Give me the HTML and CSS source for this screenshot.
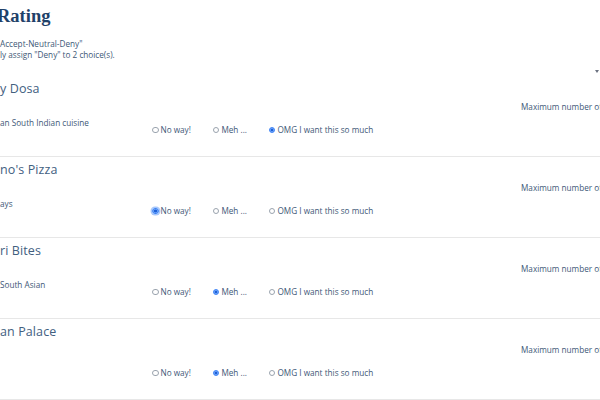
FILE: index.html
```html
<!DOCTYPE html>
<html>
<head>
<meta charset="utf-8">
<link rel="stylesheet" href="styles.css">
</head>
<body>
<div class="page">
  <header class="header">
    <h1 class="title">Rating</h1>
    <p class="note">Accept-Neutral-Deny"</p>
    <p class="note">ly assign "Deny" to 2 choice(s).</p>
    <div class="caret-row"><span class="caret"></span></div>
  </header>

  <div class="row">
    <div class="info">
      <div class="name">y Dosa</div>
      <div class="desc">an South Indian cuisine</div>
    </div>
    <div class="choices">
      <span class="opt"><span class="radio"></span>No way!</span>
      <span class="opt"><span class="radio"></span>Meh ...</span>
      <span class="opt"><span class="radio checked"></span>OMG I want this so much</span>
    </div>
    <div class="max">Maximum number of "Deny"</div>
  </div>

  <div class="row">
    <div class="info">
      <div class="name">no's Pizza</div>
      <div class="desc">ays</div>
    </div>
    <div class="choices">
      <span class="opt"><span class="radio checked focus"></span>No way!</span>
      <span class="opt"><span class="radio"></span>Meh ...</span>
      <span class="opt"><span class="radio"></span>OMG I want this so much</span>
    </div>
    <div class="max">Maximum number of "Deny"</div>
  </div>

  <div class="row">
    <div class="info">
      <div class="name">ri Bites</div>
      <div class="desc">South Asian</div>
    </div>
    <div class="choices">
      <span class="opt"><span class="radio"></span>No way!</span>
      <span class="opt"><span class="radio checked"></span>Meh ...</span>
      <span class="opt"><span class="radio"></span>OMG I want this so much</span>
    </div>
    <div class="max">Maximum number of "Deny"</div>
  </div>

  <div class="row">
    <div class="info">
      <div class="name">an Palace</div>
      <div class="desc"></div>
    </div>
    <div class="choices">
      <span class="opt"><span class="radio"></span>No way!</span>
      <span class="opt"><span class="radio checked"></span>Meh ...</span>
      <span class="opt"><span class="radio"></span>OMG I want this so much</span>
    </div>
    <div class="max">Maximum number of "Deny"</div>
  </div>
</div>
</body>
</html>
```

FILE: styles.css
```css
html, body {
  margin: 0;
  padding: 0;
  background: #ffffff;
}
body {
  width: 600px;
  height: 400px;
  overflow: hidden;
  font-family: "Open Sans", "DejaVu Sans", sans-serif;
  color: #3e5877;
}
.page {
  width: 600px;
}
.header {
  height: 76px;
  box-sizing: border-box;
  padding-top: 4px;
  display: flex;
  flex-direction: column;
}
.title {
  margin: 0 0 0 -3px;
  font-family: "Liberation Serif", "DejaVu Serif", serif;
  font-weight: bold;
  font-size: 18.5px;
  line-height: 24px;
  color: #1f4169;
}
.note {
  margin: 0;
  font-size: 8.2px;
  line-height: 11px;
  color: #3e5877;
}
.header .title + .note {
  margin-top: 10px;
}
.caret-row {
  margin-top: 10px;
  display: flex;
  justify-content: flex-end;
  padding-right: 1px;
}
.caret {
  width: 0;
  height: 0;
  border-left: 2.5px solid transparent;
  border-right: 2.5px solid transparent;
  border-top: 3px solid #6b7280;
}
.row {
  display: flex;
  height: 81px;
  box-sizing: border-box;
  border-bottom: 1px solid #e7e7e7;
}
.info {
  width: 152px;
  flex: none;
  padding-top: 4px;
}
.name {
  font-size: 12.5px;
  line-height: 17px;
  color: #42607f;
  white-space: nowrap;
  letter-spacing: 0.1px;
}
.desc {
  margin-top: 21px;
  font-size: 8.2px;
  line-height: 10px;
  color: #3e5877;
  white-space: nowrap;
  min-height: 10px;
}
.choices {
  width: 369px;
  flex: none;
  padding-top: 49px;
  display: flex;
  align-items: flex-start;
  gap: 22px;
  height: 10px;
}
.opt {
  display: flex;
  align-items: center;
  gap: 2px;
  font-size: 8.2px;
  line-height: 10px;
  color: #3e5877;
  white-space: nowrap;
}
.radio {
  width: 6.5px;
  height: 6.5px;
  box-sizing: border-box;
  border: 1px solid #9aa3ae;
  border-radius: 50%;
  background: #ffffff;
  flex: none;
}
.radio.checked {
  border-color: #3b82f6;
  background: radial-gradient(circle, #1d5fd6 0 1.3px, #6ea3f7 1.6px);
}
.radio.focus {
  box-shadow: 0 0 0 1.5px #a8c8fb;
}
.max {
  flex: 1;
  padding-top: 26px;
  font-size: 8.2px;
  line-height: 10px;
  color: #3e5877;
  white-space: nowrap;
  overflow: hidden;
}
```
